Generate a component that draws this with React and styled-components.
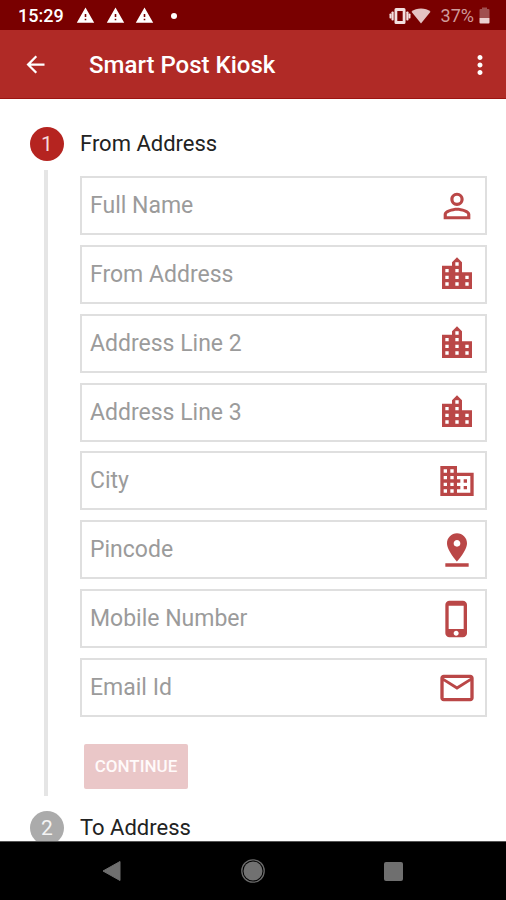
import styled, { createGlobalStyle } from "styled-components";
import {
  MdArrowBack,
  MdDomain,
  MdLocationCity,
  MdMailOutline,
  MdMoreVert,
  MdPersonOutline,
  MdPhoneIphone,
  MdPinDrop,
  MdWarning,
} from "react-icons/md";

const fields = [
  { label: "Full Name", Icon: MdPersonOutline },
  { label: "From Address", Icon: MdLocationCity },
  { label: "Address Line 2", Icon: MdLocationCity },
  { label: "Address Line 3", Icon: MdLocationCity },
  { label: "City", Icon: MdDomain },
  { label: "Pincode", Icon: MdPinDrop },
  { label: "Mobile Number", Icon: MdPhoneIphone },
  { label: "Email Id", Icon: MdMailOutline },
];

const VibrateIcon = () => (
  <svg width="22" height="18" viewBox="0 0 22 18" fill="#f3dfdf">
    <rect x="0.5" y="6.5" width="2" height="5" rx="0.8" />
    <rect x="2.5" y="4.5" width="2.2" height="9" rx="0.8" />
    <rect x="17.3" y="4.5" width="2.2" height="9" rx="0.8" />
    <rect x="19.5" y="6.5" width="2" height="5" rx="0.8" />
    <path
      fillRule="evenodd"
      d="M7 1h8a1.5 1.5 0 0 1 1.500 1.500v13a1.500 1.500 0 0 1-1.500 1.500H7a1.500 1.500 0 0 1-1.500-1.500v-13A1.500 1.500 0 0 1 7 1zm1.300 3v10h5.400V4z"
    />
  </svg>
);

const WifiIcon = () => (
  <svg width="20" height="16" viewBox="0 0 20 16" fill="#e5c4c4">
    <path d="M10 15.500 0.500 3.800C3 1.600 6.300 0.500 10 0.500s7 1.100 9.500 3.300z" />
  </svg>
);

const BatteryIcon = () => (
  <svg width="11" height="17" viewBox="0 0 11 17">
    <path
      fill="#a04f4f"
      d="M3 0.500h5V2h1.500a1 1 0 0 1 1 1v8h-10V3a1 1 0 0 1 1-1H3z"
    />
    <path fill="#ecd0d0" d="M0.500 11h10v4.500a1 1 0 0 1-1 1h-8a1 1 0 0 1-1-1z" />
  </svg>
);

export default function App() {
  return (
    <Screen>
      <GlobalStyle />
      <StatusBar>
        <Clock>15:29</Clock>
        <Alerts>
          <MdWarning />
          <MdWarning />
          <MdWarning />
        </Alerts>
        <Dot />
        <System>
          <VibrateIcon />
          <WifiIcon />
          <Percent>37%</Percent>
          <BatteryIcon />
        </System>
      </StatusBar>
      <AppBar>
        <MdArrowBack size={27} />
        <Title>Smart Post Kiosk</Title>
        <MdMoreVert size={30} />
      </AppBar>
      <Content>
        <StepHeader>
          <StepNumber $active>1</StepNumber>
          <StepTitle>From Address</StepTitle>
        </StepHeader>
        <StepBody>
          {fields.map(({ label, Icon }) => (
            <Field key={label}>
              <Label>{label}</Label>
              <Icon size={40} />
            </Field>
          ))}
          <Continue>CONTINUE</Continue>
        </StepBody>
        <StepHeader>
          <StepNumber>2</StepNumber>
          <StepTitle>To Address</StepTitle>
        </StepHeader>
      </Content>
      <NavBar>
        <svg width="20" height="22" viewBox="0 0 20 22">
          <path d="M1 11 18 1.500v19z" fill="#6f6f6f" stroke="#6f6f6f" />
        </svg>
        <svg width="26" height="26" viewBox="0 0 26 26">
          <circle cx="13" cy="13" r="9.500" fill="#717171" />
          <circle cx="13" cy="13" r="11.200" fill="none" stroke="#6a6a6a" strokeWidth="1.300" />
        </svg>
        <Recent />
      </NavBar>
    </Screen>
  );
}

const GlobalStyle = createGlobalStyle`
  * {
    box-sizing: border-box;
  }
  body {
    margin: 0;
    background: #fff;
    font-family: Roboto, "Liberation Sans", sans-serif;
  }
  svg {
    display: block;
    flex: none;
  }
`;
const Screen = styled.div`
  display: flex;
  flex-direction: column;
  width: 506px;
  height: 900px;
  overflow: hidden;
  background: #fff;
`;
const StatusBar = styled.div`
  flex: none;
  display: flex;
  align-items: center;
  height: 30px;
  padding: 1px 16px 0 18px;
  background: #790000;
  color: #fff;
`;
const Clock = styled.span`
  width: 58px;
  font-size: 18px;
  font-weight: 500;
  line-height: 30px;
`;
const Alerts = styled.div`
  display: flex;
  gap: 10.500px;
  font-size: 19px;
`;
const Dot = styled.span`
  width: 6px;
  height: 6px;
  margin-left: 17px;
  border-radius: 50%;
  background: #fff;
`;
const System = styled.div`
  display: flex;
  align-items: center;
  margin-left: auto;
`;
const Percent = styled.span`
  margin: 0 5px 0 10px;
  color: #cf9c9c;
  font-size: 18px;
`;
const AppBar = styled.div`
  flex: none;
  display: flex;
  align-items: center;
  height: 69px;
  padding: 1px 11px 0 22px;
  border-bottom: 1px solid #9c1411;
  background: #b02a26;
  color: #fff;
`;
const Title = styled.h1`
  flex: 1;
  margin: 0 0 0 40px;
  font-size: 24px;
  font-weight: 500;
  line-height: 32px;
`;
const Content = styled.div`
  flex: 1;
  min-height: 0;
  overflow: hidden;
  padding: 27px 19px 0 30px;
`;
const StepHeader = styled.div`
  display: flex;
  align-items: center;
  height: 35px;
`;
const StepNumber = styled.div`
  display: flex;
  align-items: center;
  justify-content: center;
  width: 34px;
  height: 34px;
  border-radius: 50%;
  background: ${({ $active }) => ($active ? "#b52420" : "#ababab")};
  color: ${({ $active }) => ($active ? "#f6d9d8" : "#f4f4f4")};
  font-size: 21px;
`;
const StepTitle = styled.div`
  margin-left: 16px;
  color: #222;
  font-size: 22px;
`;
const StepBody = styled.div`
  display: flex;
  flex-direction: column;
  gap: 9.860px;
  height: 626px;
  margin: 9px 0 14px 14px;
  padding: 6px 0 0 32px;
  border-left: 4px solid #e5e5e5;
`;
const Field = styled.div`
  flex: none;
  display: flex;
  align-items: center;
  justify-content: space-between;
  height: 59px;
  padding: 0 8px 0 8px;
  border: 2px solid #dfdfdf;
  color: #ba4747;
`;
const Label = styled.span`
  color: #9b9b9b;
  font-size: 23px;
`;
const Continue = styled.button`
  flex: none;
  width: 104px;
  height: 45px;
  margin: 17px 0 0 4px;
  padding: 0;
  border: 0;
  border-radius: 2px;
  background: #eac7c8;
  color: #fffafa;
  font-family: inherit;
  font-size: 17px;
  font-weight: 500;
`;
const NavBar = styled.div`
  flex: none;
  display: flex;
  align-items: center;
  justify-content: space-between;
  height: 59px;
  padding: 0 103px 0 102px;
  border-top: 1px solid #555;
  background: #000;
`;
const Recent = styled.span`
  width: 19px;
  height: 19px;
  border-radius: 2px;
  background: #6f6f6f;
`;
